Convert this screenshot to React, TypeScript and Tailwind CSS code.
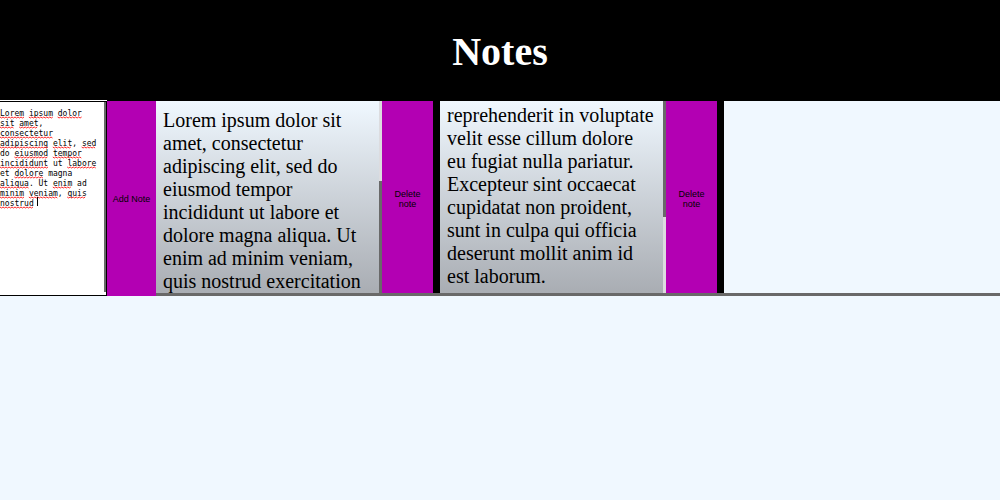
import { useState } from "react";

const DRAFT = `Lorem ipsum dolor
sit amet,
consectetur
adipiscing elit, sed
do eiusmod tempor
incididunt ut labore
et dolore magna
aliqua. Ut enim ad
minim veniam, quis
nostrud `;

const CHAR = 4.8;
const LINE = 10;

/* Words flagged by the spelling check: [line, first column, length] */
const FLAGGED: [number, number, number][] = [
  [0, 0, 5], [0, 6, 5], [0, 12, 5],
  [1, 0, 3], [1, 4, 4],
  [2, 0, 11],
  [3, 0, 10], [3, 11, 4], [3, 17, 3],
  [4, 3, 7], [4, 11, 6],
  [5, 0, 10], [5, 14, 6],
  [6, 3, 6],
  [7, 0, 6], [7, 11, 4],
  [8, 0, 5], [8, 6, 6], [8, 14, 4],
  [9, 0, 7],
];

function wave(line: number, column: number, length: number) {
  const end = (column + length) * CHAR;
  const y = (line + 1) * LINE - 1;
  let d = "";
  let up = true;
  for (let x = column * CHAR; x <= end; x += 1.5) {
    d += `${d ? "L" : "M"}${x.toFixed(1)} ${up ? y : y + 1}`;
    up = !up;
  }
  return d;
}

function SpellingMarks() {
  return (
    <svg
      aria-hidden="true"
      className="pointer-events-none absolute top-1.5 left-0 h-[102px] w-[100px]"
      viewBox="0 0 100 102"
      fill="none"
    >
      {FLAGGED.map(([line, column, length]) => (
        <path
          key={`${line}-${column}`}
          d={wave(line, column, length)}
          stroke="#ff2a2a"
          strokeWidth="1"
        />
      ))}
      <path d="M37.5 89V98" stroke="#000" strokeWidth="1" />
    </svg>
  );
}

const NOTES = [
  {
    id: 1,
    scrolled: false,
    text: "Lorem ipsum dolor sit amet, consectetur adipiscing elit, sed do eiusmod tempor incididunt ut labore et dolore magna aliqua. Ut enim ad minim veniam, quis nostrud exercitation",
  },
  {
    id: 2,
    scrolled: true,
    text: "reprehenderit in voluptate velit esse cillum dolore eu fugiat nulla pariatur. Excepteur sint occaecat cupidatat non proident, sunt in culpa qui officia deserunt mollit anim id est laborum.",
  },
];

const BUTTON =
  "shrink-0 cursor-pointer bg-[#b300b3] text-center font-['Liberation_Sans',Arial,sans-serif] text-[9px] leading-[10px] text-black";

function Note({ text, scrolled, onDelete }: { text: string; scrolled: boolean; onDelete: () => void }) {
  return (
    <li className="flex h-48 shrink-0 border-r-[7px] border-black">
      <div className="flex w-[226px] bg-linear-to-b from-[#f0f8ff] to-[#a9adb3]">
        <p
          className={`flex-1 overflow-hidden pr-2 pl-[7px] text-xl leading-[23px] text-black ${
            scrolled ? "pt-[3px]" : "pt-2"
          }`}
        >
          {text}
        </p>
        <div className={`flex w-[3px] bg-[#dcdcdf] ${scrolled ? "items-start" : "items-end"}`}>
          <div className={`w-full bg-[#696969] ${scrolled ? "h-[116px]" : "h-28"}`} />
        </div>
      </div>
      <button type="button" className={`${BUTTON} w-[51px] px-2 pt-1`} onClick={onDelete}>
        Delete note
      </button>
    </li>
  );
}

export default function App() {
  const [draft, setDraft] = useState(DRAFT);
  const [notes, setNotes] = useState(NOTES);

  const addNote = () => {
    if (!draft.trim()) return;
    setNotes([...notes, { id: Date.now(), scrolled: false, text: draft }]);
    setDraft("");
  };

  return (
    <div className="min-h-screen bg-[#f0f8ff] font-['Liberation_Serif','Times_New_Roman',serif]">
      <header className="bg-black pt-[29px] pb-[26px] text-center">
        <h1 className="text-[40px] leading-[46px] font-bold text-white">Notes</h1>
      </header>
      <main className="flex">
        <div className="flex w-[107px] shrink-0 border-y border-r border-black bg-white shadow-[0_-1px_0_#fff]">
          <div className="relative flex flex-1">
            <textarea
              aria-label="New note"
              spellCheck={false}
              value={draft}
              onChange={(e) => setDraft(e.target.value)}
              className="w-full resize-none overflow-hidden pt-[7px] font-['DejaVu_Sans_Mono','Liberation_Mono',monospace] text-[8px] leading-[10px] whitespace-pre-wrap text-black outline-none"
            />
            {draft === DRAFT && <SpellingMarks />}
          </div>
          <div className="mb-[3px] w-0.5 bg-[#696969]" />
        </div>
        <button type="button" className={`${BUTTON} w-[49px]`} onClick={addNote}>
          Add Note
        </button>
        <ul className="flex min-w-0 flex-1 overflow-hidden border-b-[3px] border-[#696969]">
          {notes.map((note) => (
            <Note
              key={note.id}
              text={note.text}
              scrolled={note.scrolled}
              onDelete={() => setNotes(notes.filter((n) => n.id !== note.id))}
            />
          ))}
        </ul>
      </main>
    </div>
  );
}
